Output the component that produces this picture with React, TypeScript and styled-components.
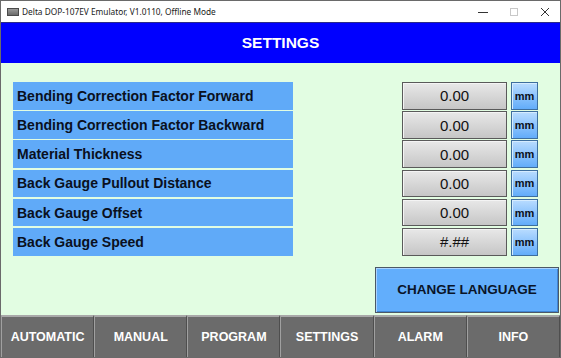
import React from 'react';
import styled, { createGlobalStyle } from 'styled-components';

const GlobalStyle = createGlobalStyle`
  html, body {
    margin: 0;
    padding: 0;
    background: #ffffff;
  }
  * {
    box-sizing: border-box;
  }
`;

const Window = styled.div`
  width: 561px;
  height: 358px;
  display: flex;
  flex-direction: column;
  border: 1px solid #6a6a6a;
  background: #ffffff;
  font-family: 'Liberation Sans', Arial, sans-serif;
  overflow: hidden;
`;

const TitleBar = styled.div`
  height: 21px;
  display: flex;
  align-items: center;
  padding-left: 6px;
  background: #ffffff;
  font-family: 'Noto Sans', 'Open Sans', sans-serif;
  font-size: 8.3px;
  color: #1a1a1a;
`;

const TitleIcon = styled.span`
  width: 12px;
  height: 8px;
  margin-right: 3px;
  border: 1px solid #4a4a4a;
  background: linear-gradient(#9a9a9a, #6a6a6a);
`;

const TitleText = styled.span`
  flex: 1;
  white-space: nowrap;
`;

const WinControls = styled.div`
  display: flex;
  align-items: center;
  height: 100%;
`;

const WinButton = styled.span`
  width: 31px;
  height: 100%;
  display: flex;
  align-items: center;
  justify-content: center;
`;

const Header = styled.div`
  height: 41px;
  display: flex;
  align-items: center;
  justify-content: center;
  background: #0000ff;
  border-top: 1px solid #2a2a8a;
  color: #ffffff;
  font-size: 15.5px;
  font-weight: bold;
`;

const Content = styled.div`
  flex: 1;
  display: flex;
  flex-direction: column;
  align-items: flex-start;
  padding: 19px 1px 2px 12px;
  background: #e2fde2;
`;

const Rows = styled.div`
  width: 525px;
  display: flex;
  flex-direction: column;
  gap: 1.5px;
`;

const Row = styled.div`
  height: 27.7px;
  display: grid;
  grid-template-columns: 280px 1fr 105px 27px;
  column-gap: 4px;
`;

const Label = styled.div`
  display: flex;
  align-items: center;
  padding-left: 4px;
  background: #60aaf8;
  color: #0a1020;
  font-size: 14px;
  font-weight: bold;
  white-space: nowrap;
`;

const ValueField = styled.div`
  display: flex;
  align-items: center;
  justify-content: center;
  border: 1px solid #5a5a5a;
  box-shadow: inset 1px 1px 0 #f4f4f4;
  background: linear-gradient(#e8e8e8, #c6c6c6);
  color: #111111;
  font-size: 15px;
`;

const UnitButton = styled.div`
  display: flex;
  align-items: center;
  justify-content: center;
  border: 1px solid #3d6e9e;
  box-shadow: inset 1px 1px 0 #d6ecff;
  background: linear-gradient(#b9dcff, #62acfa);
  color: #0a1020;
  font-size: 11px;
  font-weight: bold;
`;

const LanguageButton = styled.div`
  align-self: flex-end;
  width: 184px;
  height: 46px;
  margin-top: 11px;
  display: flex;
  align-items: center;
  justify-content: center;
  border: 1px solid #4b5866;
  box-shadow: inset 1px 1px 0 #a9d2ff, inset -1px -1px 0 #3f86d4;
  background: #62aefc;
  color: #0a1428;
  font-size: 13.5px;
  font-weight: bold;
`;

const Nav = styled.div`
  height: 42px;
  display: grid;
  grid-template-columns: repeat(6, 1fr);
  background: #6a6a6a;
`;

const NavButton = styled.div`
  display: flex;
  align-items: center;
  justify-content: center;
  border-top: 2px solid #a9a9a9;
  border-left: 1px solid #a0a0a0;
  border-right: 1px solid #4e4e4e;
  background: #6b6b6b;
  color: #ffffff;
  font-size: 12.5px;
  font-weight: bold;
`;

const settings = [
  { label: 'Bending Correction Factor Forward', value: '0.00' },
  { label: 'Bending Correction Factor Backward', value: '0.00' },
  { label: 'Material Thickness', value: '0.00' },
  { label: 'Back Gauge Pullout Distance', value: '0.00' },
  { label: 'Back Gauge Offset', value: '0.00' },
  { label: 'Back Gauge Speed', value: '#.##' },
];

const tabs = ['AUTOMATIC', 'MANUAL', 'PROGRAM', 'SETTINGS', 'ALARM', 'INFO'];

export default function App() {
  return (
    <>
      <GlobalStyle />
      <Window>
        <TitleBar>
          <TitleIcon />
          <TitleText>Delta DOP-107EV Emulator, V1.0110, Offline Mode</TitleText>
          <WinControls>
            <WinButton>
              <svg width="10" height="10" viewBox="0 0 10 10">
                <line x1="0" y1="5.5" x2="10" y2="5.5" stroke="#333" strokeWidth="1" />
              </svg>
            </WinButton>
            <WinButton>
              <svg width="10" height="10" viewBox="0 0 10 10">
                <rect x="1.5" y="1.5" width="7" height="7" fill="none" stroke="#c8c8c8" strokeWidth="1" />
              </svg>
            </WinButton>
            <WinButton>
              <svg width="10" height="10" viewBox="0 0 10 10">
                <path d="M1 1 L9 9 M9 1 L1 9" stroke="#333" strokeWidth="1" />
              </svg>
            </WinButton>
          </WinControls>
        </TitleBar>
        <Header>SETTINGS</Header>
        <Content>
          <Rows>
            {settings.map((s) => (
              <Row key={s.label}>
                <Label>{s.label}</Label>
                <span />
                <ValueField>{s.value}</ValueField>
                <UnitButton>mm</UnitButton>
              </Row>
            ))}
          </Rows>
          <LanguageButton>CHANGE LANGUAGE</LanguageButton>
        </Content>
        <Nav>
          {tabs.map((t) => (
            <NavButton key={t}>{t}</NavButton>
          ))}
        </Nav>
      </Window>
    </>
  );
}
